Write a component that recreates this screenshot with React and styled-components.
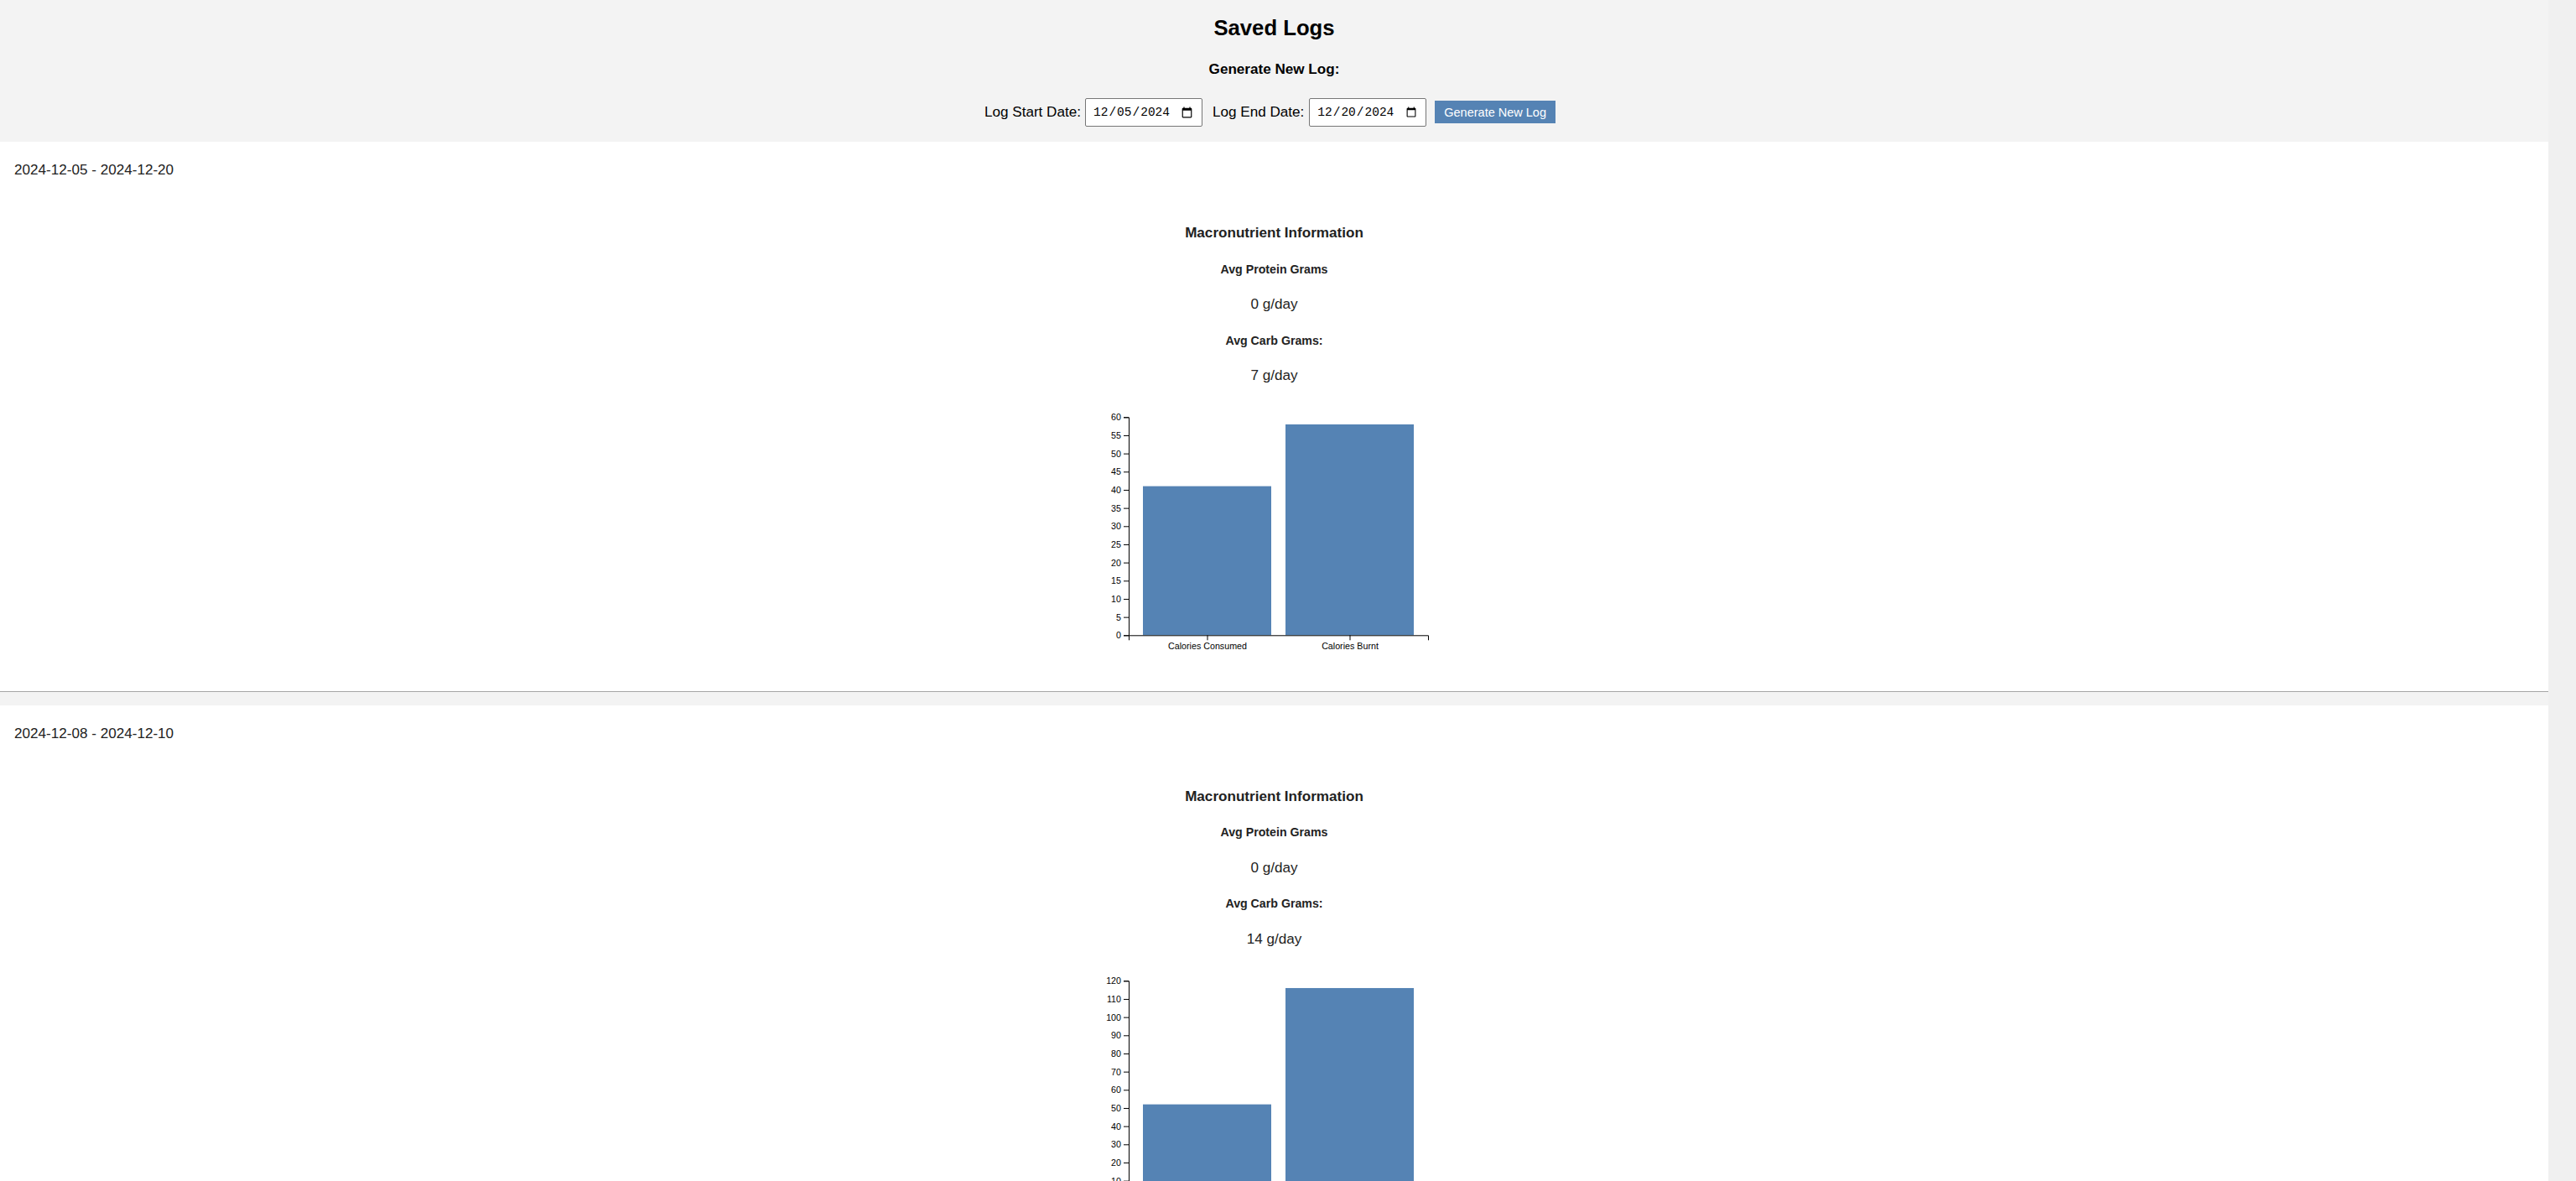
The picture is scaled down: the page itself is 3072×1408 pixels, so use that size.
import { useState } from "react";
import styled, { createGlobalStyle } from "styled-components";

const logs = [
  { id: 1, start: "2024-12-05", end: "2024-12-20", protein: 0, carbs: 7, consumed: 41, burnt: 58 },
  { id: 2, start: "2024-12-08", end: "2024-12-10", protein: 0, carbs: 14, consumed: 52, burnt: 116 },
];

// same idea as d3 linear().nice() + ticks(10)
const niceScale = (max) => {
  const raw = max / 10;
  let step = Math.pow(10, Math.floor(Math.log10(raw)));
  const err = raw / step;
  if (err >= 7.07) step *= 10;
  else if (err >= 3.16) step *= 5;
  else if (err >= 1.41) step *= 2;
  const top = Math.ceil(max / step) * step;
  const ticks = [];
  for (let v = 0; v <= top + 1e-9; v += step) ticks.push(v);
  return { top, ticks };
};

const CHART = { width: 447, height: 330, left: 50, top: 22.3, inner: 357, innerH: 260 };

const BarChart = ({ data }) => {
  const { top, ticks } = niceScale(Math.max(...data.map((d) => d.value)));
  const y = (v) => CHART.innerH - (v / top) * CHART.innerH;
  const step = CHART.inner / (data.length - 0.1 + 0.2);
  const band = step * 0.9;
  const offset = step * 0.1;

  return (
    <ChartSvg width={CHART.width} height={CHART.height}>
      <g transform={`translate(${CHART.left},${CHART.top})`}>
        {data.map((d, i) => (
          <Bar
            key={d.label}
            x={offset + i * step}
            y={y(d.value)}
            width={band}
            height={CHART.innerH - y(d.value)}
          />
        ))}
        <g>
          <AxisLine d={`M-6,${CHART.innerH + 0.5}H0.5V0.5H-6`} />
          {ticks.map((t) => (
            <g key={t} transform={`translate(0,${y(t) + 0.5})`}>
              <AxisLine d="M0,0H-6" />
              <AxisText x={-9} dy="0.32em" textAnchor="end">
                {t}
              </AxisText>
            </g>
          ))}
        </g>
        <g transform={`translate(0,${CHART.innerH})`}>
          <AxisLine d={`M0.5,6V0.5H${CHART.inner + 0.5}V6`} />
          {data.map((d, i) => (
            <g key={d.label} transform={`translate(${offset + i * step + band / 2 + 0.5},0)`}>
              <AxisLine d="M0,0V6" />
              <AxisText y={9} dy="0.71em" textAnchor="middle">
                {d.label}
              </AxisText>
            </g>
          ))}
        </g>
      </g>
    </ChartSvg>
  );
};

const LogEntry = ({ log }) => (
  <LogCard>
    <LogRange>
      {log.start} - {log.end}
    </LogRange>
    <Stats>
      <StatTitle>Macronutrient Information</StatTitle>
      <StatLabel>Avg Protein Grams</StatLabel>
      <StatValue>{log.protein} g/day</StatValue>
      <StatLabel>Avg Carb Grams:</StatLabel>
      <StatValue>{log.carbs} g/day</StatValue>
      <BarChart
        data={[
          { label: "Calories Consumed", value: log.consumed },
          { label: "Calories Burnt", value: log.burnt },
        ]}
      />
    </Stats>
  </LogCard>
);

const App = () => {
  const [start, setStart] = useState("2024-12-05");
  const [end, setEnd] = useState("2024-12-20");

  return (
    <Page>
      <GlobalStyle />
      <Content>
        <Header>
          <Title>Saved Logs</Title>
          <SubTitle>Generate New Log:</SubTitle>
          <DateRow>
            <FieldLabel htmlFor="log-start">Log Start Date:</FieldLabel>
            <DateInput
              id="log-start"
              type="date"
              value={start}
              onChange={(e) => setStart(e.target.value)}
            />
            <FieldLabel htmlFor="log-end" $spaced>
              Log End Date:
            </FieldLabel>
            <DateInput
              id="log-end"
              type="date"
              value={end}
              onChange={(e) => setEnd(e.target.value)}
            />
            <GenerateButton type="button">Generate New Log</GenerateButton>
          </DateRow>
        </Header>
        <LogList>
          {logs.map((log) => (
            <LogEntry key={log.id} log={log} />
          ))}
        </LogList>
      </Content>
    </Page>
  );
};

const GlobalStyle = createGlobalStyle`
  html, body {
    margin: 0;
    padding: 0;
    height: 100%;
    overflow: hidden;
    background: #f0f0f0;
  }
  body {
    font-family: "Liberation Sans", Arial, sans-serif;
    color: #222;
  }
`;

/* the scroll gutter stays reserved even where the bar itself is hidden */
const Page = styled.div`
  box-sizing: border-box;
  height: 100vh;
  overflow-y: auto;
  padding-right: 33px;
  background: #f0f0f0;
  scrollbar-width: none;
`;

const Content = styled.div`
  min-height: 100%;
  background: #f3f3f3;
`;

const Header = styled.header`
  display: flex;
  flex-direction: column;
  align-items: center;
  padding: 19px 0 18.5px;
  background: #f3f3f3;
  color: #000;
`;

const Title = styled.h2`
  margin: 0;
  font-size: 25.7px;
  line-height: 1.15;
  font-weight: bold;
`;

const SubTitle = styled.h4`
  margin: 24.3px 0 0;
  font-size: 17.1px;
  line-height: 1.15;
  font-weight: bold;
`;

const DateRow = styled.div`
  margin-top: 24.3px;
  display: flex;
  align-items: center;
  height: 34px;
`;

const FieldLabel = styled.label`
  font-size: 17.1px;
  line-height: 1.15;
  margin: 0 5px 0 ${(p) => (p.$spaced ? "12px" : "0")};
  ${(p) => p.$spaced && "margin-right: 6px;"}
`;

const DateInput = styled.input`
  box-sizing: border-box;
  width: 140px;
  height: 34px;
  padding: 0 8px;
  border: 1px solid #767676;
  border-radius: 2px;
  background: #fff;
  color: #000;
  font-family: "Liberation Mono", "DejaVu Sans Mono", monospace;
  font-size: 14.5px;
`;

const GenerateButton = styled.button`
  margin: 0 10px;
  height: 27px;
  padding: 0 11px;
  border: 0;
  border-radius: 0;
  background: rgb(85, 131, 180);
  color: #fff;
  font-family: "Liberation Sans", Arial, sans-serif;
  font-size: 14.5px;
  cursor: pointer;
`;

const LogList = styled.main`
  display: flex;
  flex-direction: column;
  gap: 16px;
  padding-bottom: 16px;
`;

const LogCard = styled.section`
  background: #fff;
  padding: 23.5px 17px 19px;
  border-bottom: 1px solid #a5a5a5;
`;

const LogRange = styled.div`
  font-size: 17.1px;
  line-height: 1.15;
  color: #222;
`;

const Stats = styled.div`
  display: flex;
  flex-direction: column;
  align-items: center;
  margin: 0 -17px;
`;

const StatTitle = styled.h4`
  margin: 56px 0 0;
  font-size: 17.1px;
  line-height: 1.15;
  font-weight: bold;
`;

const StatLabel = styled.h5`
  margin: 24.6px 0 0;
  font-size: 14.2px;
  line-height: 1.15;
  font-weight: bold;
`;

const StatValue = styled.p`
  margin: 24.4px 0 0;
  font-size: 17.1px;
  line-height: 1.15;
`;

const ChartSvg = styled.svg`
  display: block;
  margin-top: 17px;
  overflow: visible;
`;

const Bar = styled.rect`
  fill: rgb(85, 131, 180);
`;

const AxisLine = styled.path`
  fill: none;
  stroke: #000;
  stroke-width: 1;
`;

const AxisText = styled.text`
  font-family: "Liberation Sans", Arial, sans-serif;
  font-size: 10.7px;
  fill: #000;
`;

export default App;
